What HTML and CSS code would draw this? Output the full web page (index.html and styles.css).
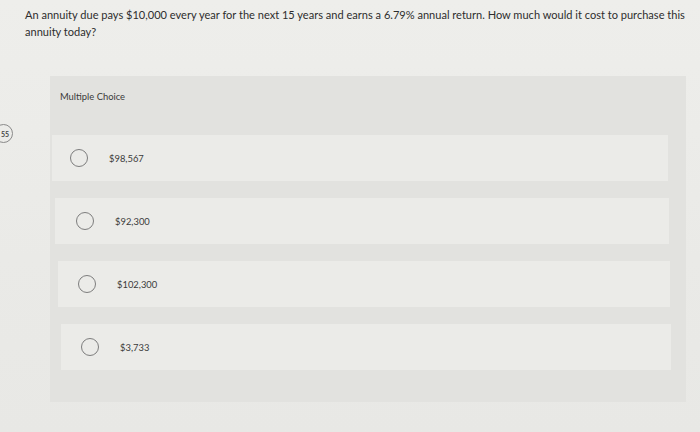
FILE: index.html
```html
<!DOCTYPE html>
<html>
<head>
<meta charset="utf-8">
<link rel="stylesheet" href="styles.css">
</head>
<body>
<div class="page">
  <div class="badge">55</div>
  <p class="question">An annuity due pays $10,000 every year for the next 15 years and earns a 6.79% annual return. How much would it cost to purchase this annuity today?</p>
  <div class="panel">
    <div class="label">Multiple Choice</div>
    <div class="options">
      <div class="option o1"><span class="radio"></span><span class="txt">$98,567</span></div>
      <div class="option o2"><span class="radio"></span><span class="txt">$92,300</span></div>
      <div class="option o3"><span class="radio"></span><span class="txt">$102,300</span></div>
      <div class="option o4"><span class="radio"></span><span class="txt">$3,733</span></div>
    </div>
  </div>
</div>
</body>
</html>
```
FILE: styles.css
```css
html, body {
  margin: 0;
  padding: 0;
  width: 700px;
  height: 432px;
  overflow: hidden;
  background: #ebebe8;
  font-family: "Lato", "Open Sans", sans-serif;
  color: #2f2f2f;
}
.page {
  position: relative;
  height: 432px;
  padding: 6px 0 0 25px;
  box-sizing: border-box;
  background: linear-gradient(180deg, #eeeeeb 0%, #eaeae7 60%, #e8e8e5 100%);
}
.question {
  margin: 0;
  font-size: 11.05px;
  line-height: 17px;
  color: #2d2d2d;
  width: 672px;
}
.panel {
  margin: 36px 0 0 25px;
  width: 636px;
  height: 326px;
  background: #e2e2df;
  box-sizing: border-box;
  padding: 14px 0 0 2px;
}
.label {
  font-size: 9.4px;
  color: #3a3a3a;
  padding-left: 8px;
  line-height: 14px;
}
.options {
  margin-top: 31px;
  display: flex;
  flex-direction: column;
  gap: 17px;
}
.option {
  height: 46px;
  background: #ebebe8;
  display: flex;
  align-items: center;
  box-sizing: border-box;
}
.o1 { width: 616px; margin-left: 0; }
.o2 { width: 614px; margin-left: 3px; }
.o3 { width: 612px; margin-left: 6px; }
.o4 { width: 610px; margin-left: 9px; }
.radio {
  width: 18px;
  height: 18px;
  border: 1.3px solid #7d7d7d;
  border-radius: 50%;
  margin-left: 18px;
  flex: none;
  box-sizing: border-box;
}
.o2 .radio { margin-left: 21px; }
.o3 .radio { margin-left: 20px; }
.o4 .radio { margin-left: 20px; }
.txt {
  margin-left: 21px;
  font-size: 9.4px;
  color: #3a3a3a;
}
.badge {
  position: absolute;
  left: -6px;
  top: 124px;
  width: 19px;
  height: 19px;
  border: 1px solid #8a8a8a;
  border-radius: 50%;
  font-size: 7px;
  font-weight: bold;
  color: #444;
  display: flex;
  align-items: center;
  justify-content: flex-end;
  padding-right: 3px;
  box-sizing: border-box;
}
```
